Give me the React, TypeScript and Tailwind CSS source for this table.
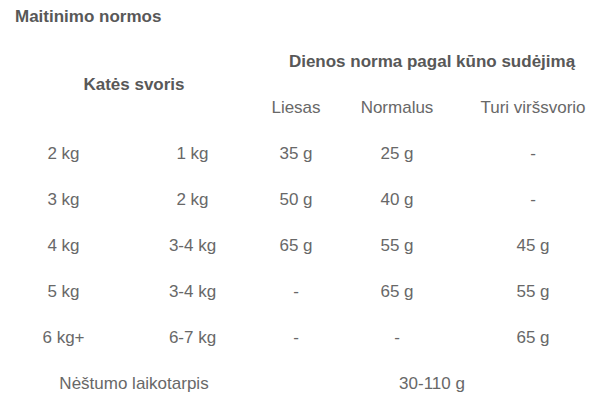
const rows: string[][] = [
  ["2 kg", "1 kg", "35 g", "25 g", "-"],
  ["3 kg", "2 kg", "50 g", "40 g", "-"],
  ["4 kg", "3-4 kg", "65 g", "55 g", "45 g"],
  ["5 kg", "3-4 kg", "-", "65 g", "55 g"],
  ["6 kg+", "6-7 kg", "-", "-", "65 g"],
];

export default function App() {
  return (
    <div
      className="w-screen h-screen overflow-hidden bg-white text-[17px] text-[#686868]"
      style={{ fontFamily: '"Liberation Sans", Arial, sans-serif' }}
    >
      <h2 className="h-[33px] flex items-center pl-[15px] font-bold text-[17px] text-[#585858]">
        Maitinimo normos
      </h2>

      <div className="mt-[6px] ml-[5px] w-[596px] grid grid-cols-[117px_141px_66px_136px_136px] auto-rows-[46px] items-center justify-items-center">
        <div className="col-span-2 row-span-2 font-bold text-[#585858]">Katės svoris</div>
        <div className="col-span-3 font-bold text-[#585858]">Dienos norma pagal kūno sudėjimą</div>
        <div>Liesas</div>
        <div>Normalus</div>
        <div className="whitespace-nowrap">Turi viršsvorio</div>

        {rows.map((row, i) =>
          row.map((cell, j) => (
            <div key={`${i}-${j}`} className="whitespace-nowrap">
              {cell}
            </div>
          ))
        )}

        <div className="col-span-2">Nėštumo laikotarpis</div>
        <div className="col-span-3">30-110 g</div>
      </div>
    </div>
  );
}
